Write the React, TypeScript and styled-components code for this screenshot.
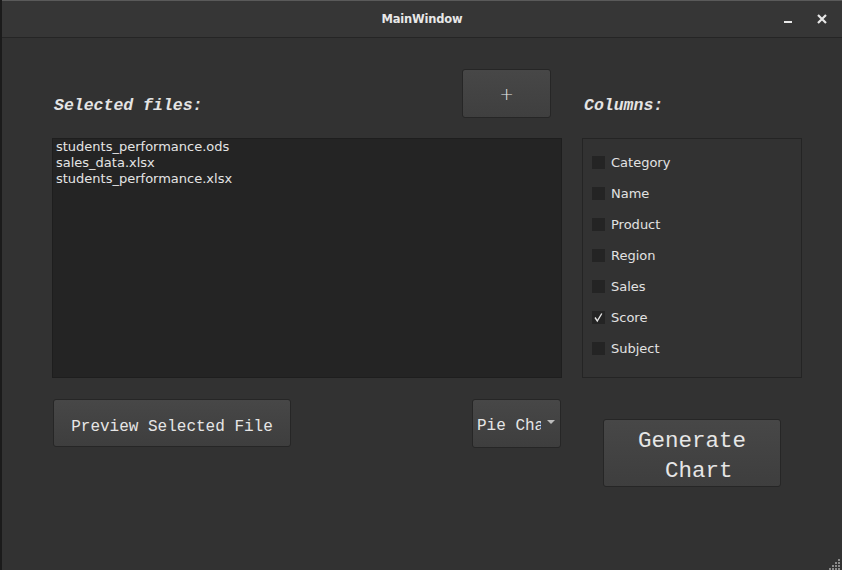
import React from "react";
import styled, { createGlobalStyle } from "styled-components";

const GlobalStyle = createGlobalStyle`
  html, body {
    margin: 0;
    padding: 0;
    background: #1b1b1b;
    overflow: hidden;
  }
`;

const files = [
  "students_performance.ods",
  "sales_data.xlsx",
  "students_performance.xlsx",
];

const columns = [
  { name: "Category", checked: false },
  { name: "Name", checked: false },
  { name: "Product", checked: false },
  { name: "Region", checked: false },
  { name: "Sales", checked: false },
  { name: "Score", checked: true },
  { name: "Subject", checked: false },
];

const App = () => {
  return (
    <>
      <GlobalStyle />
      <Window>
        <TitleBar>
          <Title>MainWindow</Title>
          <TitleButtons>
            <TitleButton aria-label="minimize">
              <svg width="10" height="10" viewBox="0 0 10 10">
                <rect x="1" y="7" width="8" height="2" fill="#e8e8e8" />
              </svg>
            </TitleButton>
            <TitleButton aria-label="close">
              <svg width="10" height="10" viewBox="0 0 10 10">
                <path d="M1 1 L9 9 M9 1 L1 9" stroke="#e8e8e8" strokeWidth="2.2" />
              </svg>
            </TitleButton>
          </TitleButtons>
        </TitleBar>

        <Content>
          <HeaderRow>
            <Label>Selected files:</Label>
            <AddButton>+</AddButton>
          </HeaderRow>
          <ColumnsHeader>
            <Label>Columns:</Label>
          </ColumnsHeader>

          <FileList>
            {files.map((f) => (
              <FileItem key={f}>{f}</FileItem>
            ))}
          </FileList>

          <ColumnsBox>
            {columns.map((c) => (
              <CheckRow key={c.name}>
                <CheckBox>
                  {c.checked && (
                    <svg width="11" height="11" viewBox="0 0 11 11">
                      <path d="M2 5.5 L4.3 9 L8.8 1.5" stroke="#e6e6e6" strokeWidth="1.4" fill="none" />
                    </svg>
                  )}
                </CheckBox>
                <span>{c.name}</span>
              </CheckRow>
            ))}
          </ColumnsBox>

          <ActionRow>
            <PushButton $width={238} $height={48}>Preview Selected File</PushButton>
            <Combo>
              <ComboText>Pie Chart</ComboText>
              <ComboArrow />
            </Combo>
          </ActionRow>

          <GenerateCell>
            <PushButton $width={178} $height={68} $big>
              {"Generate\n Chart"}
            </PushButton>
          </GenerateCell>
        </Content>
        <Grip>
          <svg width="12" height="12" viewBox="0 0 12 12">
            {[
              [10, 2], [10, 5], [7, 5], [10, 8], [7, 8], [4, 8], [10, 11], [7, 11], [4, 11], [1, 11],
            ].map(([x, y]) => (
              <rect key={`${x}-${y}`} x={x - 1} y={y - 1} width="2" height="2" fill="#8a8a8a" />
            ))}
          </svg>
        </Grip>
      </Window>
    </>
  );
};

const Window = styled.div`
  position: relative;
  box-sizing: border-box;
  height: 570px;
  margin-left: 2px;
  width: 840px;
  border-top: 1px solid #5a5a5a;
  background: #323232;
  display: flex;
  flex-direction: column;
  font-family: "DejaVu Sans", sans-serif;
  color: #e2e2e2;
`;

const TitleBar = styled.div`
  height: 36px;
  flex: none;
  background: #363636;
  border-bottom: 1px solid #252525;
  display: flex;
  align-items: center;
  justify-content: center;
  position: relative;
`;

const Title = styled.div`
  font-size: 11.5px;
  font-weight: bold;
  color: #e8e8e8;
  letter-spacing: -0.2px;
`;

const TitleButtons = styled.div`
  position: absolute;
  right: 14px;
  top: 12px;
  display: flex;
  gap: 22px;
`;

const TitleButton = styled.div`
  width: 12px;
  height: 12px;
  display: flex;
  align-items: center;
  justify-content: center;
`;

const Content = styled.div`
  display: grid;
  grid-template-columns: 510px 220px;
  grid-template-rows: 48px 240px auto;
  column-gap: 20px;
  row-gap: 21px;
  padding: 31px 0 0 50px;
`;

const HeaderRow = styled.div`
  display: flex;
  align-items: flex-end;
  justify-content: space-between;
  padding-right: 11px;
`;

const ColumnsHeader = styled.div`
  display: flex;
  align-items: flex-end;
`;

const Label = styled.div`
  font-family: "Liberation Mono", monospace;
  font-style: italic;
  font-weight: bold;
  font-size: 16.5px;
  color: #e4e4e4;
  margin-left: 2px;
  margin-bottom: 2px;
`;

const AddButton = styled.div`
  box-sizing: border-box;
  width: 89px;
  height: 49px;
  align-self: flex-start;
  border: 1px solid #262626;
  border-radius: 3px;
  background: linear-gradient(#474747, #3f3f3f);
  display: flex;
  align-items: center;
  justify-content: center;
  font-family: "DejaVu Sans", sans-serif;
  font-size: 17px;
  font-weight: 300;
  color: #e8e8e8;
`;

const FileList = styled.div`
  box-sizing: border-box;
  background: #242424;
  border: 1px solid #1e1e1e;
  padding: 0 3px;
  display: flex;
  flex-direction: column;
`;

const FileItem = styled.div`
  font-size: 13px;
  line-height: 16px;
  color: #e4e4e4;
`;

const ColumnsBox = styled.div`
  box-sizing: border-box;
  border: 1px solid #242424;
  padding: 17px 9px 15px;
  display: flex;
  flex-direction: column;
  gap: 18px;
`;

const CheckRow = styled.div`
  display: flex;
  align-items: center;
  gap: 6px;
  height: 13px;
  font-size: 13px;
  color: #e2e2e2;
`;

const CheckBox = styled.div`
  width: 13px;
  height: 13px;
  background: #242424;
  display: flex;
  align-items: center;
  justify-content: center;
`;

const ActionRow = styled.div`
  display: flex;
  justify-content: space-between;
  align-items: flex-start;
  padding-left: 1px;
  padding-right: 1px;
`;

const PushButton = styled.div<{ $width: number; $height: number; $big?: boolean }>`
  box-sizing: border-box;
  width: ${(p) => p.$width}px;
  height: ${(p) => p.$height}px;
  padding-top: ${(p) => (p.$big ? "6px" : "7px")};
  border: 1px solid #262626;
  border-radius: 3px;
  background: linear-gradient(#474747, #3e3e3e);
  display: flex;
  align-items: center;
  justify-content: center;
  text-align: center;
  white-space: pre;
  font-family: "Liberation Mono", monospace;
  font-size: ${(p) => (p.$big ? "22.5px" : "16px")};
  line-height: ${(p) => (p.$big ? "30px" : "20px")};
  color: #e6e6e6;
`;

const Combo = styled.div`
  box-sizing: border-box;
  width: 89px;
  height: 49px;
  border: 1px solid #262626;
  border-radius: 3px;
  background: linear-gradient(#474747, #3e3e3e);
  display: flex;
  align-items: center;
  padding-left: 4px;
  padding-right: 5px;
`;

const ComboText = styled.div`
  width: 64px;
  padding-top: 4px;
  overflow: hidden;
  white-space: nowrap;
  font-family: "Liberation Mono", monospace;
  font-size: 16px;
  color: #e6e6e6;
`;

const ComboArrow = styled.div`
  width: 0;
  height: 0;
  margin-left: auto;
  margin-top: -3px;
  border-left: 4px solid transparent;
  border-right: 4px solid transparent;
  border-top: 4px solid #bdbdbd;
`;

const GenerateCell = styled.div`
  padding: 20px 0 0 21px;
`;

const Grip = styled.div`
  position: absolute;
  right: 1px;
  bottom: 0;
  display: flex;
`;

export default App;
